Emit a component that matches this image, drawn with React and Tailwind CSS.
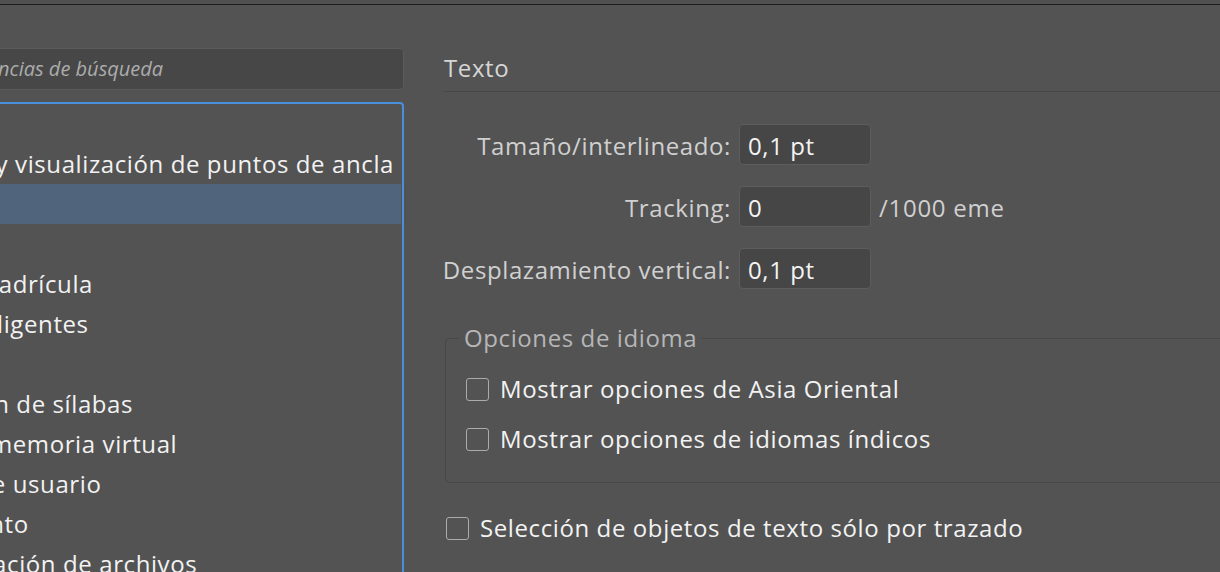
const font = { fontFamily: '"Open Sans", "DejaVu Sans", sans-serif' };

const items = [
  "General",
  "Selección y visualización de puntos de ancla",
  "Texto",
  "Unidades",
  "Guías y cuadrícula",
  "Guías inteligentes",
  "Porciones",
  "Separación de sílabas",
  "Plugins y memoria virtual",
  "Interfaz de usuario",
  "Rendimiento",
  "Administración de archivos",
];

function Checkbox({ label }) {
  return (
    <div className="flex h-[30px] items-center gap-[11px]">
      <span className="h-[23px] w-[23px] flex-none rounded-[3px] border-[1.5px] border-[#ababab]" />
      <span className="whitespace-nowrap text-[24px] tracking-[0.025em] text-[#f2f2f2]">{label}</span>
    </div>
  );
}

function Field({ label, value, unit }) {
  return (
    <div className="flex h-[41px] items-center">
      <div className="flex w-[287px] flex-none justify-end whitespace-nowrap pt-[3px] text-[24px] tracking-[0.025em] text-[#d0d0d0]">
        <span>{label}</span>
      </div>
      <div className="ml-[8px] flex h-[41px] w-[132px] flex-none items-center rounded-[4px] border border-[#5d5d5d] bg-[#464646] px-[8px] pt-[3px] text-[24px] tracking-[0.025em] text-[#f4f4f4]">
        {value}
      </div>
      {unit && <div className="ml-[8px] whitespace-nowrap pt-[3px] text-[24px] tracking-[0.03em] text-[#d0d0d0]">{unit}</div>}
    </div>
  );
}

export default function App() {
  return (
    <div className="flex h-[572px] w-[1220px] flex-col overflow-hidden bg-[#535353]" style={font}>
      <div className="h-[4px] flex-none bg-[#505050]" />
      <div className="h-px flex-none bg-[#1c1c1c]" />

      <div className="flex flex-1">
        {/* left: search + category list (cut off at the left edge) */}
        <div className="w-[404px] flex-none overflow-hidden pt-[43px]">
          <div className="ml-[-260px] w-[664px]">
            <div className="flex h-[42px] items-center whitespace-nowrap rounded-[4px] border border-[#5b5b5b] bg-[#474747] pl-[128px] text-[20px] italic text-[#acacac]">
              Buscar preferencias de búsqueda
            </div>
            <div className="mt-[12px] h-[600px] rounded-[4px] border-2 border-[#4a8fdb] pr-px">
              {items.map((it, i) => (
                <div
                  key={it}
                  className={
                    "flex h-[40px] items-center whitespace-nowrap pl-[137px] text-[24px] tracking-[0.025em] text-[#f2f2f2] " +
                    (i === 2 ? "bg-[#50657b]" : "")
                  }
                >
                  {it}
                </div>
              ))}
            </div>
          </div>
        </div>

        {/* right: text preferences */}
        <div className="ml-[40px] w-[800px] flex-none">
          <div className="border-b border-[#474747] pb-[8px] pt-[48px] text-[24px] leading-[30px] tracking-[0.025em] text-[#d6d6d6]">
            Texto
          </div>

          <div className="mt-[32px] flex flex-col gap-[21px]">
            <Field label="Tamaño/interlineado:" value="0,1 pt" />
            <Field label="Tracking:" value="0" unit="/1000 eme" />
            <Field label="Desplazamiento vertical:" value="0,1 pt" />
          </div>

          <fieldset className="ml-px mt-[34px] rounded-[4px] border border-[#474747] pb-[28px] pl-[13px]">
            <legend className="px-[5px] text-[24px] leading-[30px] tracking-[0.025em] text-[#b6b6b6]">Opciones de idioma</legend>
            <div className="ml-[7px] mt-[21px] flex flex-col gap-[20px]">
              <Checkbox label="Mostrar opciones de Asia Oriental" />
              <Checkbox label="Mostrar opciones de idiomas índicos" />
            </div>
          </fieldset>

          <div className="ml-[2px] mt-[30px]">
            <Checkbox label="Selección de objetos de texto sólo por trazado" />
          </div>
        </div>
      </div>
    </div>
  );
}
